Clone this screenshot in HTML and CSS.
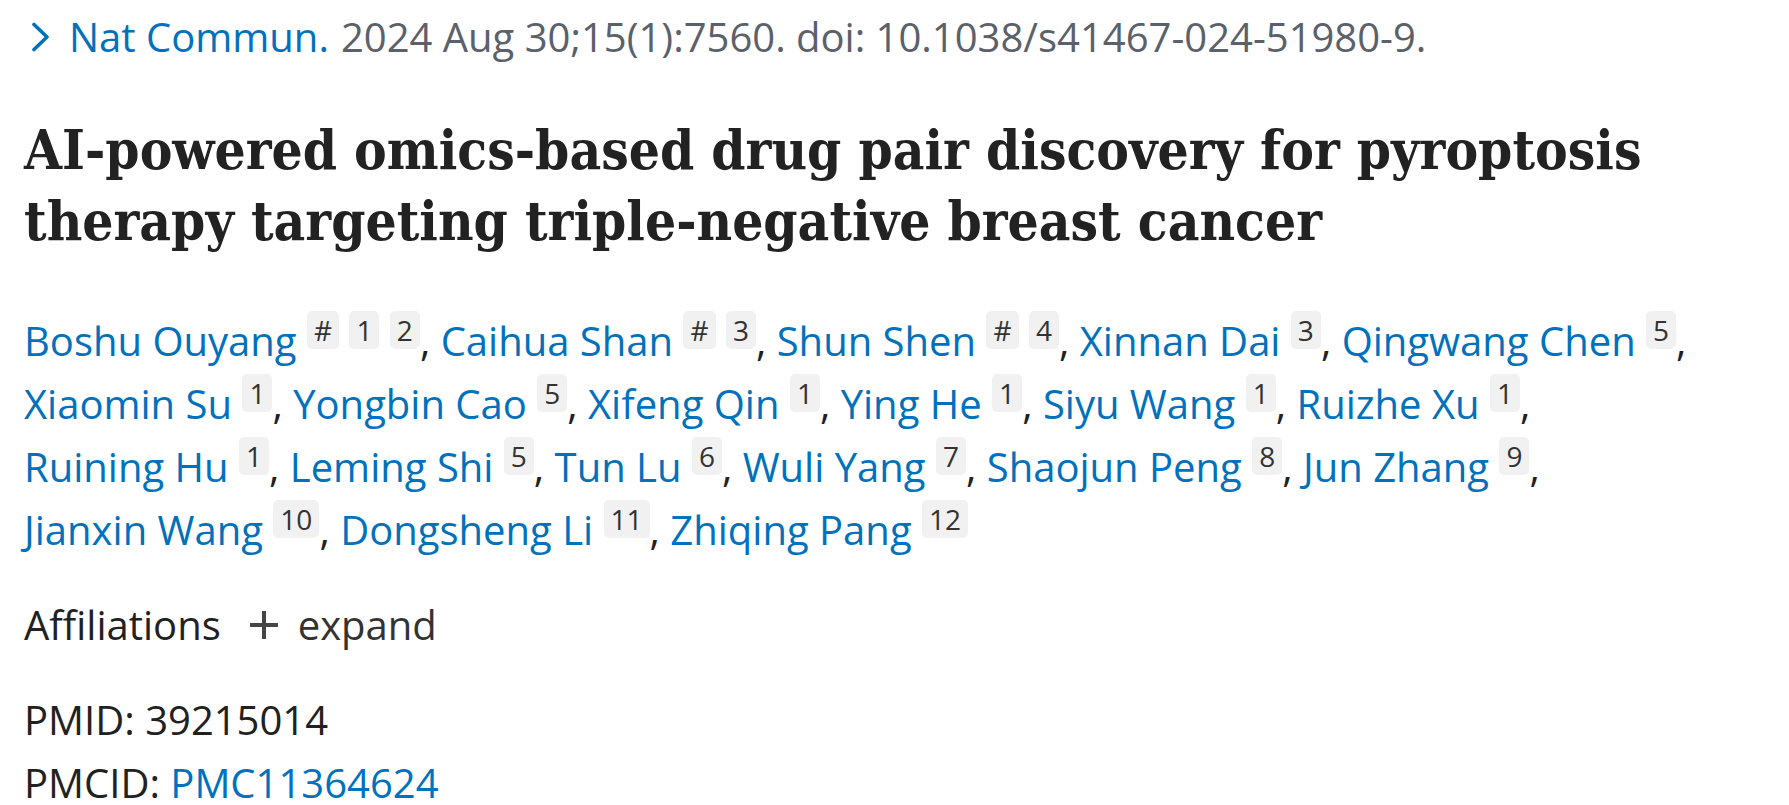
FILE: index.html
```html
<!DOCTYPE html>
<html lang="en">
<head>
<meta charset="utf-8">
<title>AI-powered omics-based drug pair discovery</title>
<link rel="stylesheet" href="styles.css">
</head>
<body>
<main class="page">
  <div class="citation">
    <svg class="chev" width="20" height="30" viewBox="0 0 20 30"><path d="M3 2.5 L16 15 L3 27.5" fill="none" stroke="#0071bc" stroke-width="3.6" stroke-linecap="round" stroke-linejoin="round"/></svg>
    <a class="journal" href="#">Nat Commun.</a>
    <span class="cit">2024 Aug 30;15(1):7560. doi: 10.1038/s41467-024-51980-9.</span>
  </div>
  <h1 class="title">AI-powered omics-based drug pair discovery for pyroptosis therapy targeting triple-negative breast cancer</h1>
  <div class="authors">
    <a href="#">Boshu Ouyang</a> <span class="badge">#</span> <span class="badge">1</span> <span class="badge">2</span>, <a href="#">Caihua Shan</a> <span class="badge">#</span> <span class="badge">3</span>, <a href="#">Shun Shen</a> <span class="badge">#</span> <span class="badge">4</span>, <a href="#">Xinnan Dai</a> <span class="badge">3</span>, <a href="#">Qingwang Chen</a> <span class="badge">5</span>,<br>
    <a href="#">Xiaomin Su</a> <span class="badge">1</span>, <a href="#">Yongbin Cao</a> <span class="badge">5</span>, <a href="#">Xifeng Qin</a> <span class="badge">1</span>, <a href="#">Ying He</a> <span class="badge">1</span>, <a href="#">Siyu Wang</a> <span class="badge">1</span>, <a href="#">Ruizhe Xu</a> <span class="badge">1</span>,<br>
    <a href="#">Ruining Hu</a> <span class="badge">1</span>, <a href="#">Leming Shi</a> <span class="badge">5</span>, <a href="#">Tun Lu</a> <span class="badge">6</span>, <a href="#">Wuli Yang</a> <span class="badge">7</span>, <a href="#">Shaojun Peng</a> <span class="badge">8</span>, <a href="#">Jun Zhang</a> <span class="badge">9</span>,<br>
    <a href="#">Jianxin Wang</a> <span class="badge">10</span>, <a href="#">Dongsheng Li</a> <span class="badge">11</span>, <a href="#">Zhiqing Pang</a> <span class="badge">12</span>
  </div>
  <div class="affil">
    <span class="affil-label">Affiliations</span>
    <span class="expand"><span class="plus"></span>expand</span>
  </div>
  <ul class="ids">
    <li>PMID: 39215014</li>
    <li>PMCID: <a href="#">PMC11364624</a></li>
  </ul>
</main>
</body>
</html>
```
FILE: styles.css
```css
html, body {
  margin: 0;
  padding: 0;
  background: #ffffff;
}
body {
  font-family: "Open Sans", "Noto Sans", sans-serif;
  color: #212121;
  font-size: 40px;
}
a {
  color: #0071bc;
  text-decoration: none;
}
.page {
  padding: 0 0 0 24px;
}
.citation {
  display: flex;
  align-items: center;
  gap: 12px;
  padding-top: 7px;
  height: 60px;
  line-height: 60px;
  color: #5b616b;
  white-space: nowrap;
}
.chev {
  margin-left: 7px;
  margin-right: 6px;
  flex: none;
}
.title {
  margin: 48px 0 0 0;
  font-family: "DejaVu Serif Condensed", "DejaVu Serif", serif;
  font-weight: bold;
  font-stretch: condensed;
  font-size: 54.5px;
  line-height: 71px;
  color: #222222;
  max-width: 1720px;
}
.authors {
  margin-top: 52px;
  line-height: 63px;
  white-space: nowrap;
}
.badge {
  display: inline-block;
  vertical-align: 15px;
  font-size: 28px;
  height: 38px;
  line-height: 38px;
  min-width: 30px;
  padding: 0 7px;
  box-sizing: border-box;
  text-align: center;
  background: #f1f1f1;
  color: #333333;
  border-radius: 5px;
}
.affil {
  margin-top: 36px;
  display: flex;
  align-items: center;
  line-height: 56px;
}
.expand {
  display: inline-flex;
  align-items: center;
  margin-left: 29px;
  color: #333;
}
.plus {
  position: relative;
  width: 28px;
  height: 28px;
  margin-right: 20px;
}
.plus::before, .plus::after {
  content: "";
  position: absolute;
  background: #444444;
}
.plus::before {
  left: 0; right: 0; top: 12px; height: 4px;
}
.plus::after {
  top: 0; bottom: 0; left: 12px; width: 4px;
}
.ids {
  list-style: none;
  margin: 35px 0 0 0;
  padding: 0;
  line-height: 63px;
}
```
